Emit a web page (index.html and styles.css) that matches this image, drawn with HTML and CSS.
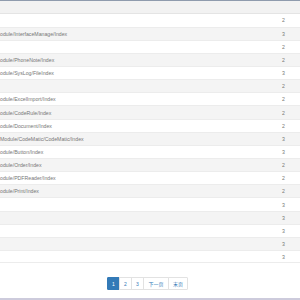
FILE: index.html
```html
<!DOCTYPE html>
<html>
<head>
<meta charset="utf-8">
<link rel="stylesheet" href="styles.css">
</head>
<body>
<div class="page">
  <div class="table">
    <div class="row head"><span class="path"></span><span class="num"></span></div>
    <div class="row"><span class="path"></span><span class="num">2</span></div>
    <div class="row alt"><span class="path">odule/InterfaceManage/Index</span><span class="num">3</span></div>
    <div class="row"><span class="path"></span><span class="num">2</span></div>
    <div class="row alt"><span class="path">odule/PhoneNote/Index</span><span class="num">2</span></div>
    <div class="row"><span class="path">odule/SysLog/FileIndex</span><span class="num">3</span></div>
    <div class="row alt"><span class="path"></span><span class="num">2</span></div>
    <div class="row"><span class="path">odule/ExcelImport/Index</span><span class="num">2</span></div>
    <div class="row alt"><span class="path">odule/CodeRule/Index</span><span class="num">2</span></div>
    <div class="row"><span class="path">odule/Document/Index</span><span class="num">2</span></div>
    <div class="row alt"><span class="path">Module/CodeMatic/CodeMatic/Index</span><span class="num">3</span></div>
    <div class="row"><span class="path">odule/Button/Index</span><span class="num">3</span></div>
    <div class="row alt"><span class="path">odule/Order/Index</span><span class="num">2</span></div>
    <div class="row"><span class="path">odule/PDFReader/Index</span><span class="num">2</span></div>
    <div class="row alt"><span class="path">odule/Print/Index</span><span class="num">2</span></div>
    <div class="row"><span class="path"></span><span class="num">3</span></div>
    <div class="row alt"><span class="path"></span><span class="num">3</span></div>
    <div class="row"><span class="path"></span><span class="num">3</span></div>
    <div class="row alt"><span class="path"></span><span class="num">3</span></div>
    <div class="row last"><span class="path"></span><span class="num">3</span></div>
  </div>
  <div class="pager">
    <span class="pg active">1</span>
    <span class="pg">2</span>
    <span class="pg">3</span>
    <span class="pg wide">下一页</span>
    <span class="pg wide2">末页</span>
  </div>
  <div class="bottom"></div>
</div>
</body>
</html>
```
FILE: styles.css
```css
html, body {
  margin: 0;
  padding: 0;
  background: #ffffff;
}
.page {
  width: 300px;
  height: 300px;
  display: flex;
  flex-direction: column;
  font-family: "Liberation Sans", Arial, "Noto Sans CJK SC", sans-serif;
  overflow: hidden;
}
.table {
  border-top: 1px solid #8f9bad;
  display: flex;
  flex-direction: column;
}
.row {
  box-sizing: border-box;
  height: 13.15px;
  display: flex;
  align-items: center;
  border-top: 1px solid #ececec;
  background: #ffffff;
  font-size: 5.2px;
  color: #777777;
}
.row.head {
  height: 12.5px;
  border-top: none;
  background: #f2f2f2;
  border-bottom: 1px solid #e4e4e4;
}
.row.head + .row {
  border-top: none;
}
.row.alt {
  background: #f4f4f4;
}
.row.last {
  border-bottom: 1px solid #ececec;
}
.path {
  flex: 1;
  white-space: nowrap;
}
.num {
  width: 18px;
  text-align: left;
}
.pager {
  margin-top: 14px;
  display: flex;
  justify-content: center;
  padding-right: 4px;
}
.pg {
  box-sizing: border-box;
  height: 13px;
  width: 13px;
  display: flex;
  align-items: center;
  justify-content: center;
  border: 1px solid #e2e2e2;
  margin-left: -1px;
  background: #ffffff;
  color: #337ab7;
  font-size: 5px;
}
.pg.active {
  background: #337ab7;
  border-color: #337ab7;
  color: #ffffff;
  border-radius: 1px 0 0 1px;
}
.pg.wide {
  width: 26px;
}
.pg.wide2 {
  width: 20px;
  border-radius: 0 1px 1px 0;
}
.bottom {
  margin-top: auto;
  height: 2px;
  background: #cdcbdc;
}
```
